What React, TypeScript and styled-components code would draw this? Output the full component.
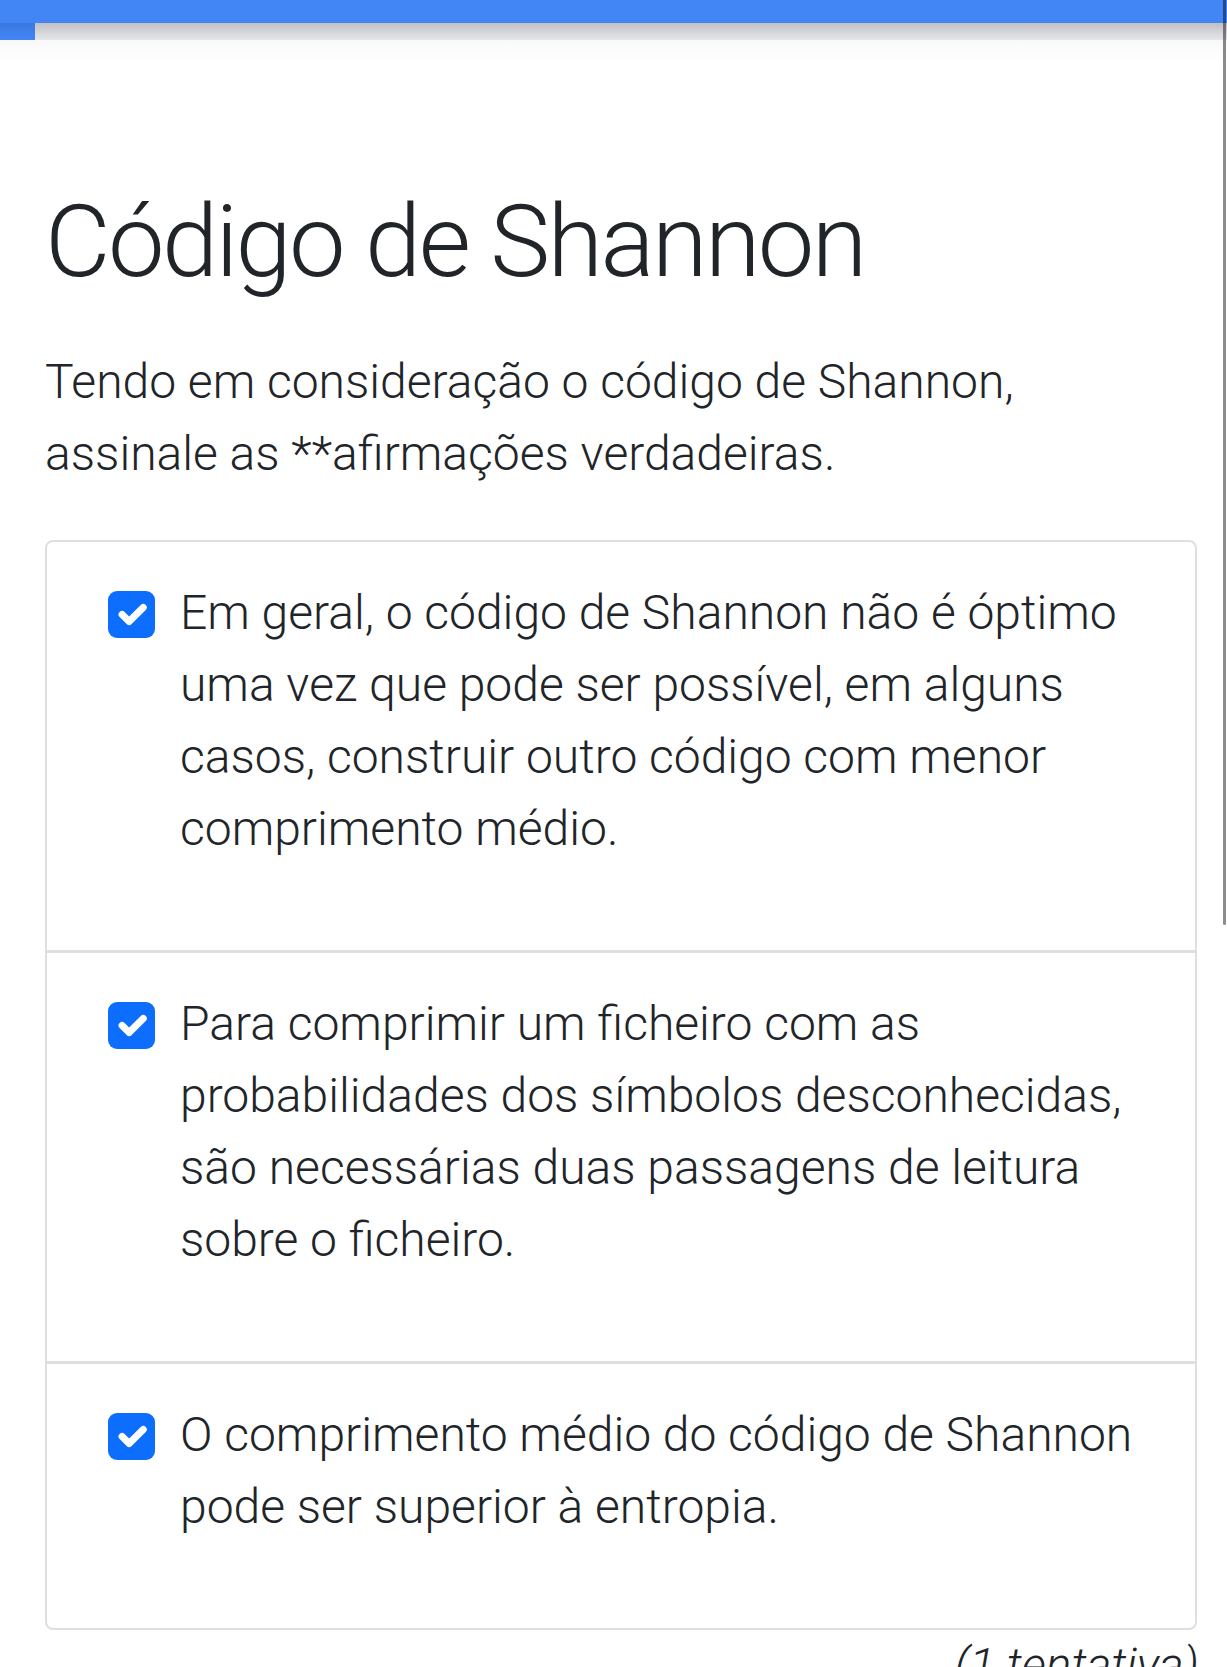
import React from "react";
import styled, { createGlobalStyle } from "styled-components";

const GlobalStyle = createGlobalStyle`
  html, body {
    margin: 0;
    padding: 0;
    background: #ffffff;
    overflow: hidden;
  }
  body {
    font-family: Roboto, "Noto Sans", "Liberation Sans", sans-serif;
    font-weight: 300;
    color: #212529;
  }
  * { box-sizing: border-box; }
`;

const Page = styled.div`
  position: relative;
  width: 1227px;
  height: 1667px;
  overflow: hidden;
  background: #ffffff;
`;

const TopBar = styled.header`
  height: 23px;
  background: #4286f5;
`;

const Progress = styled.div`
  height: 17px;
  display: flex;
  background: linear-gradient(#c0c0c4, #d7d8db 60%, #e5e6e8);
`;

const ProgressFill = styled.div`
  height: 100%;
  background: linear-gradient(#3a78e0, #4286f5);
`;

const Fade = styled.div`
  height: 22px;
  background: linear-gradient(#f9f9f9, #ffffff);
`;

const Main = styled.main`
  padding: 0 30px 0 45px;
`;

const Title = styled.h1`
  margin: 119px 0 0;
  font-size: 101px;
  line-height: 1.2;
  font-weight: 300;
  letter-spacing: -2.6px;
`;

const Lead = styled.p`
  margin: 44px 24px 0 0;
  font-size: 48px;
  line-height: 1.5;
`;

const OptionList = styled.div`
  margin-top: 50px;
  border: 2px solid #dfdfdf;
  border-radius: 8px;
  display: flex;
  flex-direction: column;
`;

const OptionRow = styled.label<{ $first?: boolean }>`
  display: flex;
  align-items: flex-start;
  gap: 25px;
  padding: 35px 30px 85px 61px;
  border-top: ${(p) => (p.$first ? "none" : "3px solid #dfdfdf")};
  font-size: 48px;
  line-height: 1.5;
`;

const Checkbox = styled.span`
  flex: 0 0 47px;
  width: 47px;
  height: 47px;
  margin-top: 14px;
  border-radius: 9px;
  background: #0d6efd;
  display: flex;
  align-items: center;
  justify-content: center;
`;

const LabelText = styled.span`
  flex: 1;
`;

const Attempts = styled.div`
  text-align: right;
  font-style: italic;
  font-size: 48px;
  line-height: 1.5;
  margin-right: -2px;
`;

const ScrollThumb = styled.div`
  position: absolute;
  top: 0;
  right: 1px;
  width: 3px;
  height: 925px;
  border-radius: 0 0 2px 2px;
  background: rgba(0, 0, 0, 0.45);
`;

const CheckMark = () => (
  <svg width="47" height="47" viewBox="0 0 20 20" aria-hidden="true">
    <path
      d="m6 10 3 3 6-6"
      fill="none"
      stroke="#ffffff"
      strokeWidth="3"
      strokeLinecap="round"
      strokeLinejoin="round"
    />
  </svg>
);

const options = [
  "Em geral, o código de Shannon não é óptimo uma vez que pode ser possível, em alguns casos, construir outro código com menor comprimento médio.",
  "Para comprimir um ficheiro com as probabilidades dos símbolos desconhecidas, são necessárias duas passagens de leitura sobre o ficheiro.",
  "O comprimento médio do código de Shannon pode ser superior à entropia.",
];

export default function App() {
  return (
    <Page>
      <GlobalStyle />
      <TopBar />
      <Progress>
        <ProgressFill style={{ width: "35px" }} />
      </Progress>
      <Fade />
      <Main>
        <Title>Código de Shannon</Title>
        <Lead>
          Tendo em consideração o código de Shannon, assinale as **afirmações verdadeiras.
        </Lead>
        <OptionList>
          {options.map((text, i) => (
            <OptionRow key={i} $first={i === 0}>
              <Checkbox>
                <CheckMark />
              </Checkbox>
              <LabelText>{text}</LabelText>
            </OptionRow>
          ))}
        </OptionList>
        <Attempts>(1 tentativa)</Attempts>
      </Main>
      <ScrollThumb />
    </Page>
  );
}
